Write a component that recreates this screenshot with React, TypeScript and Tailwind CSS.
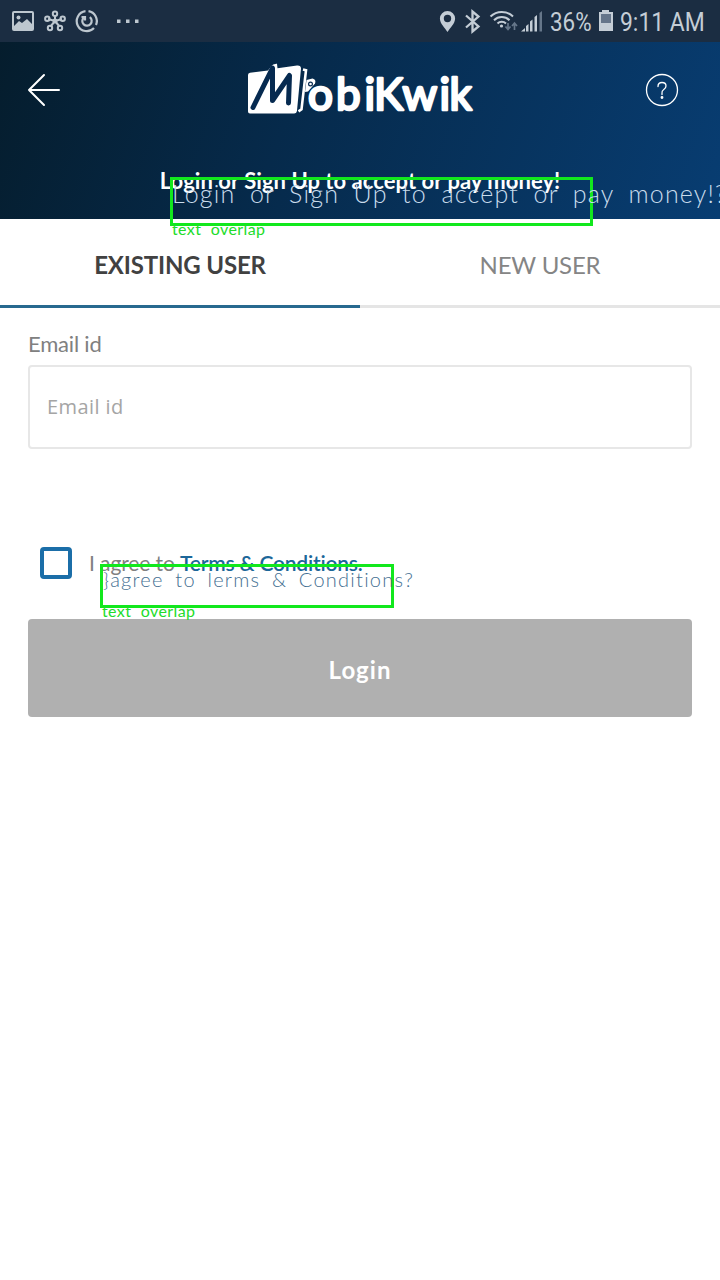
import React from "react";

function StatusBar() {
  return (
    <div className="flex h-[42px] items-center justify-between bg-[#1b2d42] text-[#c4cdd6]">
      <svg width="150" height="42" viewBox="0 0 150 42" fill="none" stroke="#bdc7cf" strokeWidth="2">
        <rect x="13" y="12" width="20" height="18" rx="1" />
        <path d="M14 26l5-5 3 2 5-4 5 5v6H14z" fill="#bdc7cf" stroke="none" />
        <circle cx="18.500" cy="17.500" r="2" fill="#bdc7cf" stroke="none" />
        <path d="M55 21V16M55 21l7-2M55 21l4.500 5.500M55 21l-4.500 5.500M55 21l-7-2" />
        <circle cx="55" cy="21" r="2.500" fill="#bdc7cf" stroke="none" />
        <circle cx="55" cy="13.800" r="2.200" />
        <circle cx="62.700" cy="18.800" r="2.200" />
        <circle cx="60" cy="28" r="2.200" />
        <circle cx="50" cy="28" r="2.200" />
        <circle cx="47.300" cy="18.800" r="2.200" />
        <path d="M85.500 11.200A10 10 0 1 0 94 28M88.500 11.200A10 10 0 0 1 96 25" strokeWidth="2.200" />
        <path d="M89.800 17.200a4.700 4.700 0 1 1-6 .3M81.500 17h3.500v3.500" strokeWidth="2.200" />
        <path d="M117 19.500h3.500v3.500h-3.500zM126 19.500h3.500v3.500h-3.500zM135 19.500h3.500v3.500h-3.500z" fill="#bdc7cf" stroke="none" />
      </svg>
      <div className="flex items-center">
        <svg width="112" height="42" viewBox="436 0 112 42" fill="none" stroke="#c4cdd6">
          <path fill="#c4cdd6" stroke="none" fillRule="evenodd" d="M447.500 11a7.600 7.600 0 0 1 7.600 7.600c0 5-5 9.400-7.600 13.400-2.600-4-7.600-8.400-7.600-13.400A7.600 7.600 0 0 1 447.500 11zm0 3.800a3.700 3.700 0 1 0 0 7.400 3.700 3.700 0 0 0 0-7.400z" />
          <path d="M466 15.500l12.500 11-6 5V11.500l6 5L466 27.500" strokeWidth="2.300" />
          <path d="M490.500 16.500a16 16 0 0 1 22.500 0M494 20.200a11 11 0 0 1 15.500 0M497.500 23.500a6 6 0 0 1 8.500 0" strokeWidth="2" />
          <circle cx="501.500" cy="26" r="1.600" fill="#c4cdd6" stroke="none" />
          <path d="M508 23v6M505.500 26.500l2.500 3 2.500-3M514.500 30v-6M512 26l2.500-3 2.500 3" stroke="#66778a" strokeWidth="1.700" />
          <path d="M521 31.500l4-3.500v3.500zM526 31.500V26l2.500-2v7.500zM530 31.500V21.500l2.500-2v12zM534.500 31.500V17l2.500-2v16.500z" fill="#c4cdd6" stroke="none" />
          <path d="M539.500 31.500V13l2.500-2v20.500z" fill="#66778a" stroke="none" />
        </svg>
        <span className="flex w-[50px] items-center pt-0.5 pl-0.5"><span className="origin-left scale-x-[.86] font-['Roboto'] text-[26px] whitespace-nowrap">36%</span></span>
        <svg width="16" height="42" viewBox="598 0 16 42">
          <path d="M602 10h7v2h4v19h-14V12h3z" fill="#c4cdd6" />
          <path d="M601 14h10v9h-10z" fill="#65758a" />
        </svg>
        <span className="flex w-[106px] items-center pt-0.5 pl-1.5"><span className="origin-left scale-x-[.88] font-['Roboto'] text-[26px] whitespace-nowrap">9:11 AM</span></span>
      </div>
    </div>
  );
}

function Logo() {
  return (
    <svg width="230" height="56" viewBox="246 60 230 56" fill="#fff" className="relative -top-0.5 left-2 overflow-visible">
      <path d="M248 75q0-2 2-2.300l18-2.200 3-4q2-3 6-2.700l.5 4.500L297 65.500q4-.3 4 3l-4 42q-.3 3-3 3H250q-2 0-2-2z" />
      <path d="M253 107.500L272.500 68L272.500 100.500L289.500 75.500L288.500 103" fill="none" stroke="#062a50" strokeWidth="5" strokeLinecap="round" strokeLinejoin="round" />
      <path d="M303 69.500l3 .8-4.500 39-3 2" fill="none" stroke="#fff" strokeWidth="2.600" />
      <path d="M306.500 80l6-1.500q4 1 2.500 5l-7 8-3 .5z" />
      <circle cx="310.500" cy="84" r="1.900" fill="#fff" stroke="#062a50" strokeWidth="1.200" />
      <text x="308 336 364.500 374 402.500 439.500 449.500" y="109.500" fontFamily="Lato, sans-serif" fontSize="44" fontWeight="400" stroke="#fff" strokeWidth="2.600" strokeLinejoin="round">obiKwik</text>
    </svg>
  );
}

function Annotation({ box, text, tag, textClass }: { box: string; text: string; tag: string; textClass: string }) {
  return (
    <div className={`absolute z-10 border-3 border-[#12e81d] ${box}`}>
      <span className={`absolute whitespace-nowrap font-['Lato'] ${textClass}`}>{text}</span>
      <span className="absolute top-full -mt-1 -left-px font-['Lato'] text-[16px] leading-5 tracking-[.4px] [word-spacing:5px] whitespace-nowrap text-[#22dc2a]">{tag}</span>
    </div>
  );
}

export default function App() {
  return (
    <div className="relative h-[1280px] w-[720px] overflow-hidden bg-white font-['Lato',sans-serif]">
      <StatusBar />
      <header className="h-[177px] bg-[linear-gradient(110deg,#051d2d_0%,#062a4b_40%,#083d72_100%)] pt-[18px]">
        <div className="flex h-[60px] items-center justify-between pr-[41px] pl-[27px]">
          <svg width="34" height="34" viewBox="0 0 34 34" fill="none" stroke="#fff" strokeWidth="2" strokeLinecap="round" strokeLinejoin="round">
            <path d="M32 17H2M17 2L2 17l15 15" />
          </svg>
          <Logo />
          <svg width="34" height="34" viewBox="0 0 34 34" fill="none" stroke="#fff" strokeWidth="1.300">
            <circle cx="17" cy="17" r="15.500" />
            <path d="M13 13.500q0-4 4-4t4 3.500q0 2-2.200 3.500T17 20v1.500" strokeLinecap="round" />
            <circle cx="17" cy="24.500" r=".8" fill="#fff" />
          </svg>
        </div>
        <p className="mt-[47px] text-center text-[22px] leading-7 font-bold tracking-[.05px] text-white">Login or Sign Up to accept or pay money!</p>
      </header>
      <nav className="flex h-[89px] text-center text-[24px] leading-[92px]">
        <div className="w-1/2 border-b-3 border-[#27698f] font-bold tracking-[-.15px] text-[#414141]">EXISTING USER</div>
        <div className="w-1/2 border-b-3 border-[#e5e5e5] tracking-[-.2px] text-[#858585]">NEW USER</div>
      </nav>
      <main className="px-7 pt-[22px]">
        <label className="block h-[35px] text-[22px] leading-7 tracking-[-.2px] text-[#808080]">Email id</label>
        <div className="flex h-[84px] items-center rounded border-2 border-[#e7e7e7] pl-[17px] font-['Open_Sans'] text-[20px] tracking-[.4px] text-[#a5a5a5]">Email id</div>
        <div className="mt-[98px] flex h-8 items-center pl-3">
          <span className="h-8 w-8 rounded-[4px] border-4 border-[#1b6ea8]" />
          <p className="ml-[17px] text-[21px] tracking-[-.1px] text-[#808080]">I agree to <span className="font-semibold tracking-[-.2px] text-[#1c6799]">Terms &amp; Conditions.</span></p>
        </div>
        <button className="mt-10 block h-[98px] w-full rounded bg-[#b0b0b0] pt-1 text-[24px] font-bold tracking-[1px] text-white">Login</button>
      </main>
      <Annotation box="left-[170px] top-[177px] h-[49px] w-[423px]" text="Login or Sign Up to accept or pay money!?" tag="text overlap" textClass="-left-px -top-px text-[25px] leading-7 font-light tracking-[1.2px] [word-spacing:6.5px] text-[#c9dcec]" />
      <Annotation box="left-[100px] top-[564px] h-[44px] w-[294px]" text="}agree to lerms & Conditions?" tag="text overlap" textClass="left-0 top-0 text-[20px] leading-6 font-light tracking-[1.25px] [word-spacing:5px] text-[#456f92]" />
    </div>
  );
}
